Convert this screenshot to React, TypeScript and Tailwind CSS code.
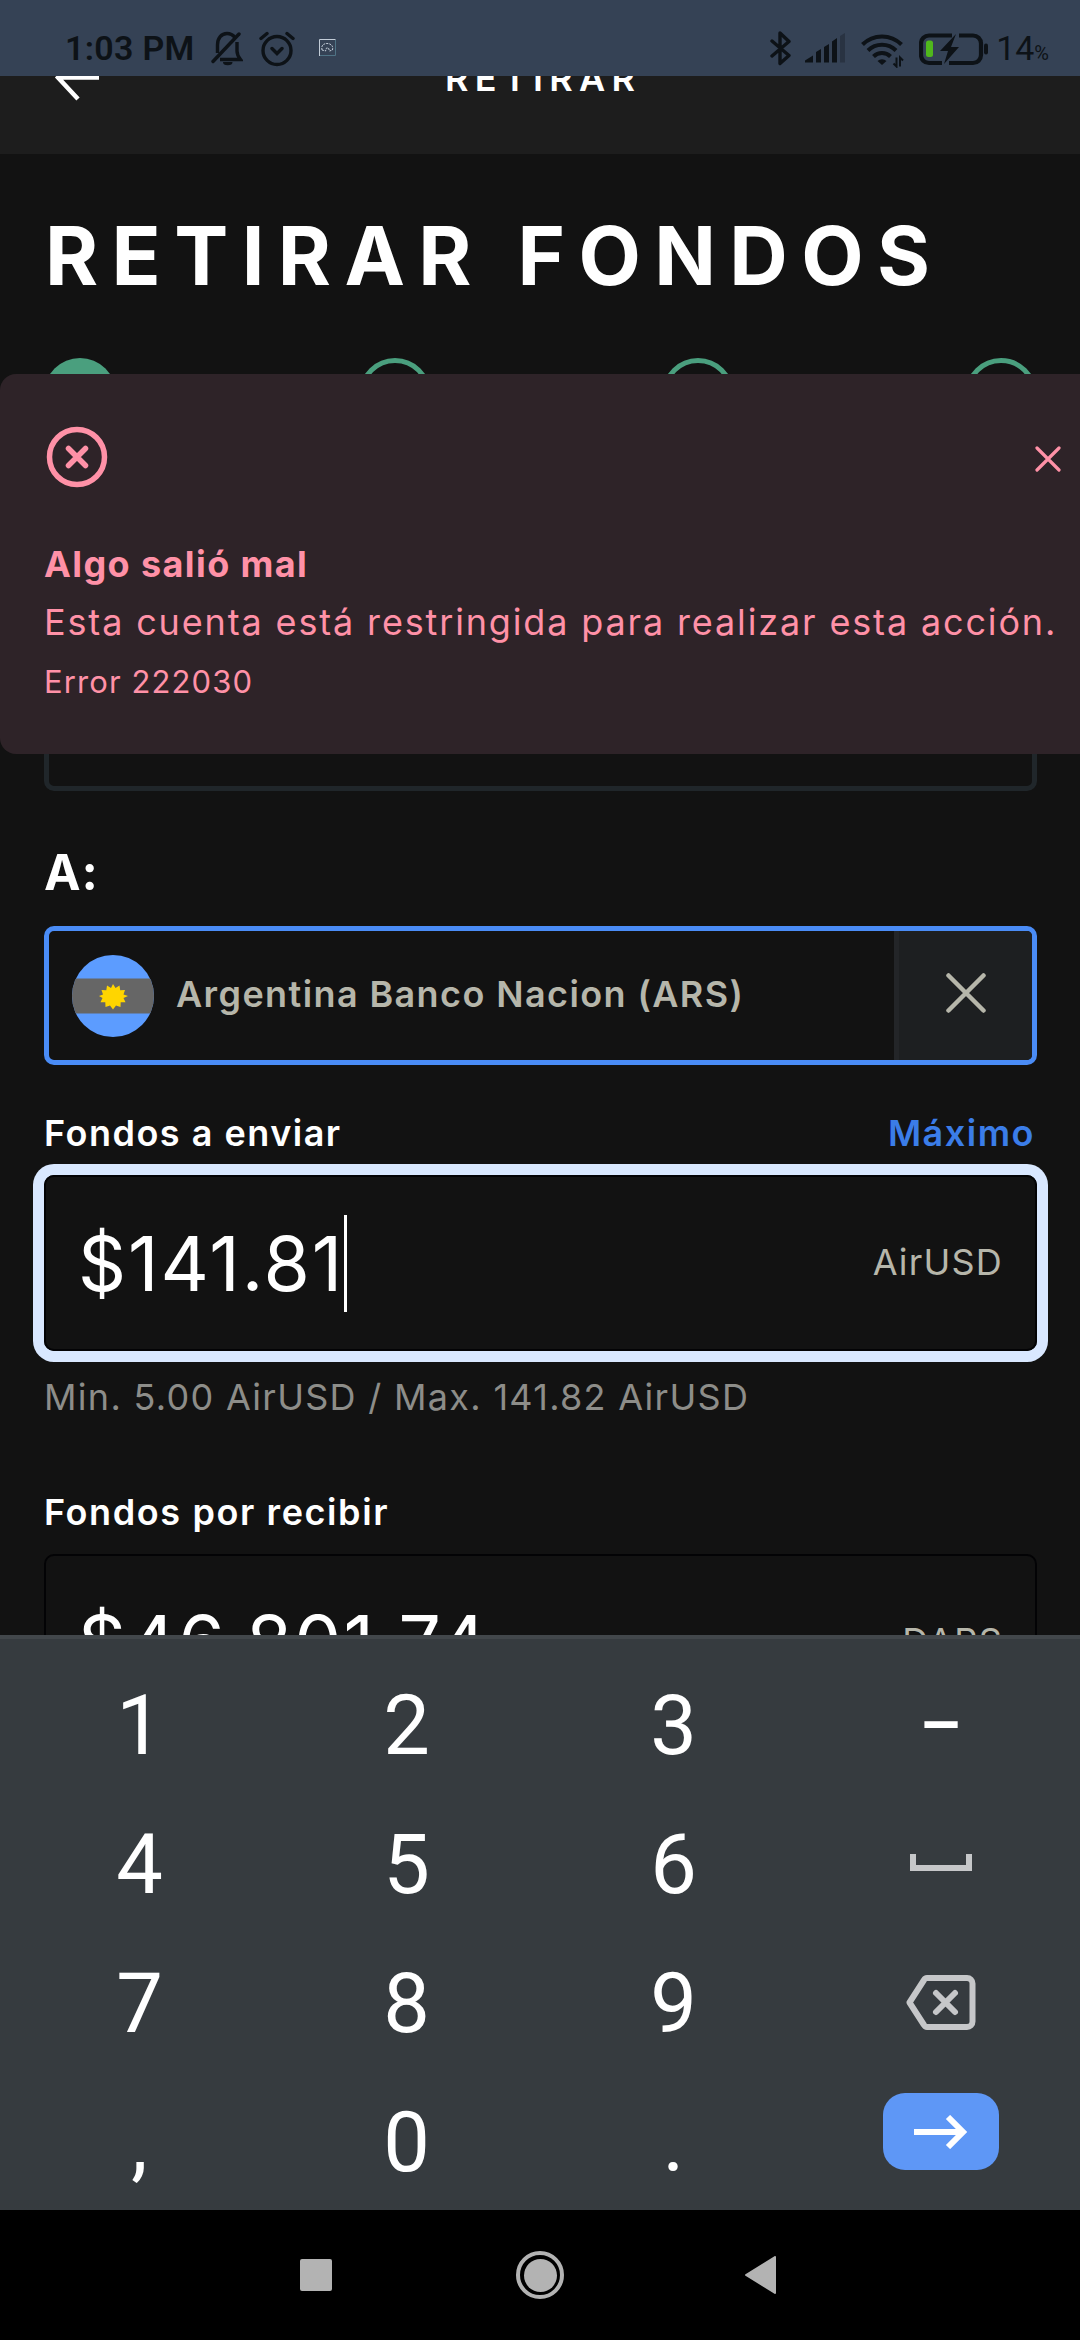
import type { ReactNode } from "react";

const StatusBar = () => (
  <header className="relative z-10 h-[76px] shrink-0 bg-[#354255] text-[#0d1217] font-['Roboto',sans-serif]">
    <div className="flex h-full items-start justify-between pl-[65px] pr-[31px] pt-[28px]">
      <div className="flex h-10 items-center">
        <span className="w-[146px] text-[34px] font-semibold leading-10 tracking-[0.3px]">1:03 PM</span>
        <svg className="h-10 w-8" viewBox="0 0 32 40" fill="none" stroke="currentColor" strokeWidth="3.400">
          <path d="M6.500 25V17c0-7 4-11.500 9.500-11.500 3.500 0 6 1.500 8 4M26 14v9c0 4 1.500 6 3.500 8.500H9" />
          <path d="M2 33.500 28 6" strokeLinecap="round" />
          <path d="M12 34h9.500a4.700 3.200 0 0 1-9.500 0z" fill="currentColor" stroke="none" />
        </svg>
        <svg className="ml-4 h-10 w-9" viewBox="0 0 36 40" fill="none" stroke="currentColor" strokeWidth="3.400" strokeLinecap="round">
          <circle cx="18" cy="22.500" r="14" />
          <path d="m13 20.500 5 5 5-5M2 10.500 8 5.500M34 10.500l-6-5" />
        </svg>
        <svg className="ml-6 h-10 w-[17px]" viewBox="0 0 17 40" fill="none" strokeWidth="1">
          <path d="M16.500 12v15.500H1" stroke="#4f7385" />
          <path d="M.5 28V11.500h16" stroke="#c3cdd8" />
          <path d="M3 22c-1-4 1-6.500 5-6.500s6.500 2.500 5.500 6.500l-3 1-1-3h-2l-1 3z" stroke="#c3cdd8" strokeDasharray="2 1" />
        </svg>
      </div>
      <div className="flex h-10 items-center">
        <svg className="h-10 w-[22px]" viewBox="0 0 22 40" fill="none" stroke="currentColor" strokeWidth="3.400" strokeLinejoin="round" strokeLinecap="round">
          <path d="m2 13 17 14.500-9 8V5l9 8.500L2 28" />
        </svg>
        <svg className="ml-[13px] h-10 w-10" viewBox="0 0 40 40" fill="currentColor">
          <path d="M0 34.500v-2l8-5v7zM11 34.500V24l5-3v13.500zM19 34.500V19l5-3v18.500zM27 34.500V13.500l5-3.500v24.500z" />
          <path d="M35 34.500V8l5-3v29.500z" opacity=".3" />
        </svg>
        <svg className="ml-4 h-10 w-[43px]" viewBox="0 0 43 40" fill="none" stroke="currentColor" strokeWidth="4">
          <path d="M1.500 16.500a27.500 27.500 0 0 1 39 0M7 22.500a20 20 0 0 1 28 0M12.500 28.500a12 12 0 0 1 17 0" />
          <path d="M16.500 33a6.500 6.500 0 0 1 9 0L21 37z" fill="currentColor" stroke="none" />
          <path d="M35.500 29.500v9l-3-3M39 38.500v-9l3 3" strokeWidth="2" />
        </svg>
        <svg className="ml-[15px] h-10 w-[69px]" viewBox="0 0 69 40" fill="none" stroke="currentColor" strokeWidth="4.200">
          <path d="M33 7.500H10a8 8 0 0 0-8 8v11.500a8 8 0 0 0 8 8h13M40 7.500h14a8 8 0 0 1 8 8v11.500a8 8 0 0 1-8 8H30" />
          <rect x="7" y="12.500" width="7" height="16.500" rx="2.500" fill="#50b81c" stroke="none" />
          <path d="M37 6 21 23h8l-4 13 15-17h-8z" fill="currentColor" stroke="none" />
          <rect x="65" y="15.500" width="4" height="11" rx="2" fill="currentColor" stroke="none" />
        </svg>
        <span className="ml-2 mt-[4px] text-[34px] leading-10">
          14<span className="text-[20px]">%</span>
        </span>
      </div>
    </div>
  </header>
);

const TopBar = () => (
  <div className="relative h-[78px] shrink-0 overflow-hidden bg-[#1d1d1d]">
    <svg className="absolute -top-[22px] left-[54px] h-[48px] w-[46px]" viewBox="0 0 46 48" fill="none" stroke="white" strokeWidth="4.500">
      <path d="M45 23.500H4M25 2 4 23.500l20 21.500" />
    </svg>
    <p className="absolute left-[445px] -top-[18px] whitespace-nowrap text-[36px] font-semibold leading-[40px] tracking-[6.3px]">RETIRAR</p>
  </div>
);

const Steps = () => (
  <div className="flex h-[72px] shrink-0 pl-[44px]">
    <div className="mr-[243px] size-[72px] shrink-0 rounded-full bg-[#4a9f7e]" />
    {[0, 1, 2].map((i) => (
      <div key={i} className="mr-[231px] size-[72px] shrink-0 rounded-full border-[5px] border-[#4a9f7e]" />
    ))}
  </div>
);

const ErrorAlert = () => (
  <div className="absolute left-0 top-[374px] h-[380px] w-[1120px] rounded-[16px] bg-[#2e2328] text-[#ff91a7]">
    <div className="flex w-[1061px] justify-between pl-[46px] pt-[52px]">
      <svg className="size-[62px]" viewBox="0 0 62 62" fill="none" stroke="currentColor" strokeWidth="5.500" strokeLinecap="round">
        <circle cx="31" cy="31" r="27.500" />
        <path d="m22.500 22.500 17 17m0-17-17 17" />
      </svg>
      <svg className="mt-5 size-[26px]" viewBox="0 0 26 26" fill="none" stroke="currentColor" strokeWidth="3.200" strokeLinecap="round">
        <path d="m2 2 22 22m0-22L2 24" />
      </svg>
    </div>
    <div className="whitespace-nowrap pl-[44px] pt-[48px]">
      <p className="text-[36px] font-bold leading-[56px] tracking-[1.4px]">Algo salió mal</p>
      <p className="text-[36px] leading-[60px] tracking-[1.85px]">Esta cuenta está restringida para realizar esta acción.</p>
      <p className="text-[31px] leading-[60px] tracking-[1.1px]">Error 222030</p>
    </div>
  </div>
);

const ArgentinaFlag = () => (
  <svg className="size-[82px] rounded-full" viewBox="0 0 82 82">
    <path fill="#5c9cff" d="M0 0h82v82H0z" />
    <path fill="#666" d="M0 23.500h82v35H0z" />
    <path
      fill="#ffd500"
      d="m41 29 2.500 4 4-2.500.7 4.800 4.800-.3-1.500 4.500 4.500 1.500-4.500 2 2 4.300-4.800 0-.2 4.700-4.500-1.500L41 54.500l-3-4-4.500 1.500-.2-4.700-4.800 0 2-4.300-3.500-2 4-1.500-1.500-4.500 4.800.3.700-4.800 4 2.500z"
    />
  </svg>
);

const AccountSelect = () => (
  <div className="flex h-[139px] w-[993px] overflow-hidden rounded-[10px] border-[5px] border-[#4a8cf6]">
    <div className="flex flex-1 items-center pl-[23px]">
      <ArgentinaFlag />
      <span className="mb-[3px] ml-[22px] whitespace-nowrap text-[36px] font-semibold leading-[50px] tracking-[1.4px] text-[#b6b6aa]">
        Argentina Banco Nacion (ARS)
      </span>
    </div>
    <div className="flex w-[138px] items-center justify-center border-l-[5px] border-[#232528] bg-[#1d1f21] pb-[5px]">
      <svg className="size-10" viewBox="0 0 40 40" fill="none" stroke="#b6b6aa" strokeWidth="4.500" strokeLinecap="round">
        <path d="m2.500 2.500 35 35m0-35-35 35" />
      </svg>
    </div>
  </div>
);

const AmountInput = ({ value, currency, focused = false }: { value: string; currency: string; focused?: boolean }) => (
  <div
    className={`flex h-[176px] w-[993px] items-center justify-between rounded-[10px] border-2 border-[#030305] pl-8 pr-8 ${
      focused ? "shadow-[0_0_0_11px_#d9e8ff]" : ""
    }`}
  >
    <div className="flex items-center">
      <span className="text-[75px] leading-[97px] tracking-[1.9px]">{value}</span>
      {focused && <span className="h-[97px] w-[3px] bg-white" />}
    </div>
    <span className="mb-[2px] text-[36px] leading-[50px] tracking-[1.2px] text-[#b6b6aa]">{currency}</span>
  </div>
);

const Key = ({ children }: { children: ReactNode }) => (
  <button className="flex h-[139px] items-center justify-center text-[83px] leading-[97px]">{children}</button>
);

const Keyboard = () => (
  <section className="absolute left-0 top-[1635px] h-[575px] w-full border-t-4 border-[#42474b] bg-[#363b3f] px-[6px] pt-[17px] font-['Roboto',sans-serif]">
    <div className="grid grid-cols-4">
      <Key>1</Key>
      <Key>2</Key>
      <Key>3</Key>
      <Key>
        <span className="text-[66px] font-semibold">–</span>
      </Key>
      <Key>4</Key>
      <Key>5</Key>
      <Key>6</Key>
      <Key>
        <svg className="mb-[5px] h-[17px] w-[62px]" viewBox="0 0 62 17" fill="none" stroke="#c6c7c9" strokeWidth="6">
          <path d="M3 0v14h56V0" />
        </svg>
      </Key>
      <Key>7</Key>
      <Key>8</Key>
      <Key>9</Key>
      <Key>
        <svg className="mb-[2px] h-[55px] w-[70px]" viewBox="0 0 70 55" fill="none" stroke="#c6c7c9" strokeWidth="6" strokeLinejoin="round">
          <path d="M21 3h40a5.500 5.500 0 0 1 5.500 5.500v38A5.500 5.500 0 0 1 61 52H21q-2 0-3-2L3.500 27.500 18 5q1-2 3-2Z" />
          <path d="m30 18 19 19m0-19L30 37" strokeLinecap="round" />
        </svg>
      </Key>
      <Key>,</Key>
      <Key>0</Key>
      <Key>.</Key>
      <Key>
        <span className="mb-[22px] flex h-[77px] w-[116px] items-center justify-center rounded-[22px] bg-[#5e97f6]">
          <svg className="h-[34px] w-[54px]" viewBox="0 0 54 34" fill="none" stroke="white" strokeWidth="6">
            <path d="M0 17h49M34 2l15 15-15 15" />
          </svg>
        </span>
      </Key>
    </div>
  </section>
);

const NavBar = () => (
  <nav className="absolute left-0 top-[2210px] h-[130px] w-full bg-black text-[#b3b3b3]">
    <div className="flex h-full items-center pl-[300px]">
      <div className="size-8 rounded-[2px] bg-current" />
      <div className="ml-[184px] flex size-12 items-center justify-center rounded-full border-4 border-current">
        <div className="size-[33px] shrink-0 rounded-full bg-current" />
      </div>
      <svg className="ml-[181px] h-[38px] w-[31px]" viewBox="0 0 31 38" fill="currentColor" stroke="currentColor" strokeWidth="2" strokeLinejoin="round">
        <path d="M30 1v36L1 19z" />
      </svg>
    </div>
  </nav>
);

const App = () => {
  return (
    <div className="relative flex h-[2340px] w-[1080px] flex-col overflow-hidden bg-[#121212] text-white font-['Inter',sans-serif]">
      <StatusBar />
      <TopBar />
      <h1 className="mt-[52px] mb-[52px] whitespace-nowrap pl-[45px] text-[81px] font-bold leading-[100px] tracking-[13.4px]">RETIRAR FONDOS</h1>
      <Steps />

      <main className="flex flex-col pl-[44px]">
        <div className="mt-[200px] h-[161px] w-[993px] rounded-[10px] border-[5px] border-[#20262a]" />

        <h2 className="mt-[52px] mb-[23px] text-[49px] font-bold leading-[60px] tracking-[1px]">A:</h2>
        <AccountSelect />

        <div className="mt-[43px] mb-[17px] flex w-[993px] justify-between pr-[2px] text-[36px] font-semibold leading-[50px] tracking-[1.5px]">
          <span>Fondos a enviar</span>
          <span className="text-[#3b7de8]">Máximo</span>
        </div>
        <AmountInput value="$141.81" currency="AirUSD" focused />
        <p className="mt-[21px] text-[36px] leading-[50px] tracking-[1.3px] text-[#8d8d89]">Min. 5.00 AirUSD / Max. 141.82 AirUSD</p>

        <p className="mt-[65px] mb-[17px] text-[36px] font-semibold leading-[50px] tracking-[1.6px]">Fondos por recibir</p>
        <AmountInput value="$46,801.74" currency="DARS" />
      </main>

      <ErrorAlert />
      <Keyboard />
      <NavBar />
    </div>
  );
};

export default App;
